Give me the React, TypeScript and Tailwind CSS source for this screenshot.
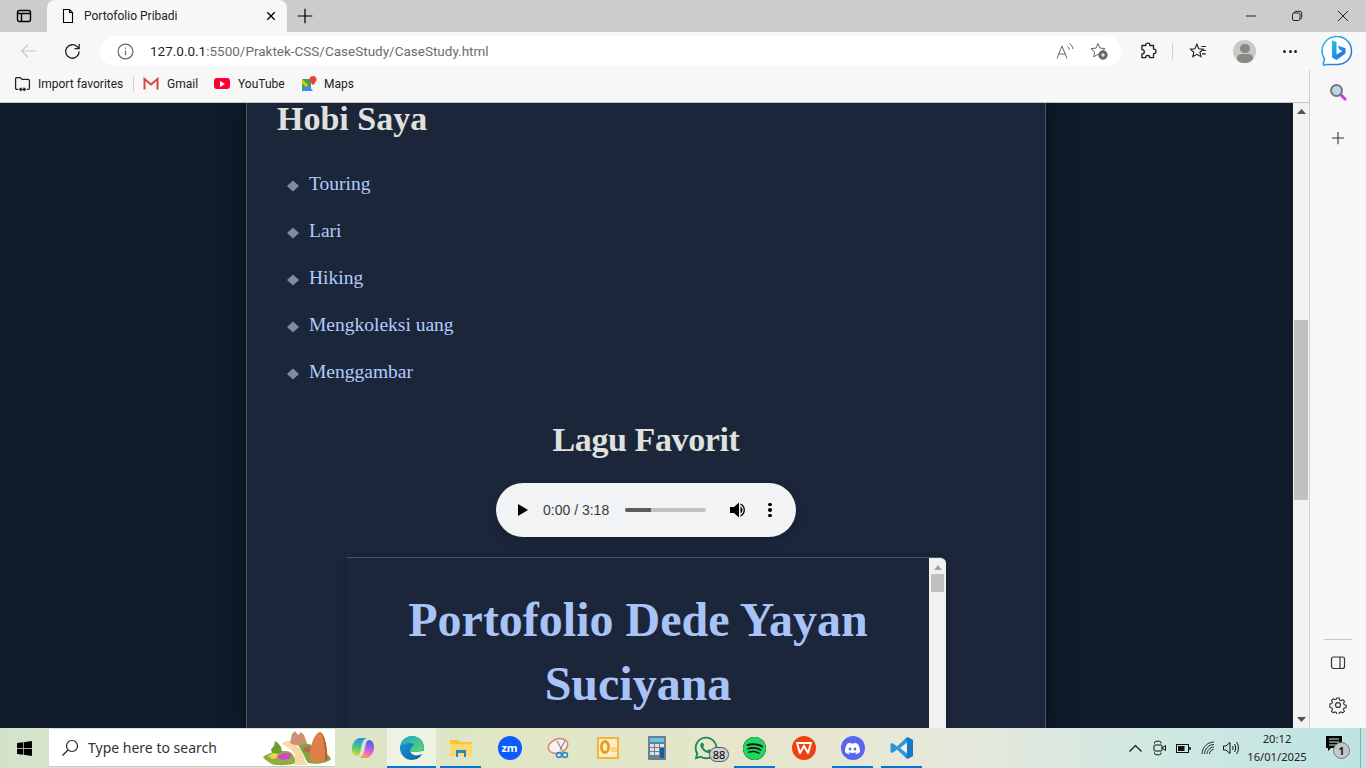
import { SiDiscord, SiSpotify } from 'react-icons/si'
import { FaWhatsapp, FaWindows } from 'react-icons/fa'

const hobbies = ['Touring', 'Lari', 'Hiking', 'Mengkoleksi uang', 'Menggambar']

function Stroke({ size = 16, children }: { size?: number; children: React.ReactNode }) {
  return (
    <svg width={size} height={size} viewBox="0 0 16 16" fill="none" stroke="currentColor" strokeWidth="1.1">
      {children}
    </svg>
  )
}

function TabBar() {
  return (
    <div className="h-8 bg-[#cccccc] flex items-end text-black">
      <div className="w-[47px] h-8 flex items-center justify-center">
        <Stroke size={16}>
          <rect x="1.5" y="2.5" width="13" height="11" rx="2" strokeWidth="1.4" />
          <path d="M1.5 5.5h13M5.5 5.5v8" strokeWidth="1.4" />
        </Stroke>
      </div>
      <div className="w-[240px] h-8 bg-[#f7f7f7] rounded-t-lg flex items-center pl-[13px] pr-[10px]">
        <Stroke size={16}>
          <path d="M3.5 1.5h6l3 3v10h-9z M9.5 1.5v3h3" />
        </Stroke>
        <span className="ml-[8px] text-[12px] flex-1 text-[#222]">Portofolio Pribadi</span>
        <Stroke size={12}>
          <path d="M3 3l10 10M13 3L3 13" strokeWidth="1.8" />
        </Stroke>
      </div>
      <div className="w-9 h-8 flex items-center justify-center">
        <Stroke size={18}>
          <path d="M8 1.5v13M1.5 8h13" />
        </Stroke>
      </div>
      <div className="flex-1" />
      <div className="h-8 flex items-center">
        <div className="w-[46px] flex justify-center">
          <svg width="12" height="12" viewBox="0 0 12 12"><path d="M1 6h10" stroke="#222" /></svg>
        </div>
        <div className="w-[46px] flex justify-center">
          <svg width="12" height="12" viewBox="0 0 12 12" fill="none" stroke="#222">
            <rect x="1.5" y="3" width="7.5" height="7.5" rx="1.4" />
            <path d="M3.5 3V2.2a1 1 0 0 1 1-.9h4.4a1.8 1.8 0 0 1 1.8 1.8v4.4a1 1 0 0 1-1 1H9" />
          </svg>
        </div>
        <div className="w-[46px] flex justify-center">
          <svg width="12" height="12" viewBox="0 0 12 12"><path d="M1 1l10 10M11 1L1 11" stroke="#222" /></svg>
        </div>
      </div>
    </div>
  )
}

function Toolbar() {
  return (
    <div className="h-[38px] bg-[#f7f7f7] flex items-center text-[#222]">
      <div className="w-[57px] flex justify-center pl-[1px] text-[#c9c9c9]">
        <Stroke size={18}>
          <path d="M14.5 8h-13M7 2.5L1.5 8 7 13.5" />
        </Stroke>
      </div>
      <div className="w-[30px] flex justify-center">
        <Stroke size={19}>
          <path d="M13.6 8a5.7 5.7 0 1 1-1.7-4.1l1.6 1.6M13.6 1.6v3.9H9.7" />
        </Stroke>
      </div>
      <div className="ml-[13px] w-[1021px] h-[30px] bg-white rounded-full flex items-center">
        <div className="ml-[17px] text-[#666]">
          <Stroke size={17}>
            <circle cx="8" cy="8" r="7" />
            <path d="M8 7v4.5M8 4.2v1.2" />
          </Stroke>
        </div>
        <span className="ml-[16px] text-[13.5px] flex-1">
          <span className="text-[#1f1f1f]">127.0.0.1</span>
          <span className="text-[#6c6c6c]">:5500/Praktek-CSS/CaseStudy/CaseStudy.html</span>
        </span>
        <div className="text-[#666] flex items-center gap-[15px] mr-[13px]">
          <svg width="19" height="18" viewBox="0 0 19 18" fill="none" stroke="currentColor">
            <path d="M1 16.5L6 4l5 12.5M2.7 12h6.6M11.5 4.5c1.1.7 1.7 1.7 1.9 3M13.5 1.5c2 1.2 3.1 3.1 3.4 5.5" />
          </svg>
          <svg width="18" height="18" viewBox="0 0 18 18" fill="none" stroke="currentColor">
            <path d="M8 1.5l2 4.6 5 .5-3.7 3.3 1 4.900L8 12.3l-4.3 2.500 1-4.900L1 6.600l5-.5z" />
            <circle cx="13" cy="13" r="4.2" fill="#666" />
            <path d="M13 11v4M11 13h4" stroke="#fff" />
          </svg>
        </div>
      </div>
      <div className="ml-[18px]">
        <Stroke size={18}>
          <path d="M6 2.2c0-1.6 3.6-1.6 3.6 0v.9h3.3v3.2h.7c1.900 0 1.900 4 0 4h-.7v3.600H9.500v-.7c0-1.600-3.500-1.600-3.500 0v.7H2.600v-3.300h.8c1.700 0 1.700-3.800 0-3.800h-.8V3.100H6z" strokeWidth="1.2" strokeLinejoin="round" />
        </Stroke>
      </div>
      <div className="ml-[15px] w-px h-4 bg-[#cfcfcf]" />
      <div className="ml-[16px]">
        <Stroke size={18}>
          <path d="M7 2l1.700 4 4 .4-3 2.700.9 4L7 11 3.400 13.100l.9-4-3-2.700 4-.4zM11 4h4M12.300 7.500H15M11.500 10.500H15" strokeWidth="1" />
        </Stroke>
      </div>
      <div className="ml-[26px] w-[23px] h-[23px] rounded-full bg-[#cbc9c6] overflow-hidden flex flex-col items-center">
        <div className="mt-[4px] w-[10px] h-[10px] rounded-full bg-[#8a8885]" />
        <div className="mt-[1px] w-[16px] h-[10px] rounded-full bg-[#8a8885]" />
      </div>
      <div className="ml-[27px] flex gap-[2.5px]">
        <span className="w-[3px] h-[3px] rounded-full bg-[#222]" />
        <span className="w-[3px] h-[3px] rounded-full bg-[#222]" />
        <span className="w-[3px] h-[3px] rounded-full bg-[#222]" />
      </div>
      <div className="ml-[24px]">
        <svg width="32" height="32" viewBox="0 0 32 32">
          <defs>
            <linearGradient id="bing" x1="0" y1="0" x2="1" y2="1">
              <stop offset="0" stopColor="#1fc3e8" />
              <stop offset="1" stopColor="#2563e0" />
            </linearGradient>
          </defs>
          <path d="M16 1.500a14.500 14.500 0 0 1 14.500 14.500C30.500 24 24 29.500 16 29.500H5c-1.400 1.200-3 .8-2.600-1L3.500 24A14.500 14.500 0 0 1 16 1.500z" fill="#fff" stroke="url(#bing)" strokeWidth="1.5" />
          <path d="M11 5.500l4.500 1.600v12.400l6-3.400-3-1.400-1.700-4.200 7.700 2.700v5.300L15.500 25 11 22.500z" fill="url(#bing)" />
        </svg>
      </div>
    </div>
  )
}

function Favorites() {
  return (
    <div className="h-[33px] pb-[5px] bg-[#f7f7f7] border-b border-[#c4c4c4] flex items-center text-[12px] text-[#222]">
      <div className="ml-[14px]">
        <Stroke size={17}>
          <path d="M4 13.500H2.500a1 1 0 0 1-1-1v-9a1 1 0 0 1 1-1h3.600l1.400 1.600h6a1 1 0 0 1 1 1v7.400a1 1 0 0 1-1 1H12M5.500 13.500h5M7 12l-1.700 1.500L7 15M9 12l1.700 1.500L9 15" strokeWidth="1.2" />
        </Stroke>
      </div>
      <span className="ml-[7px] w-[85px] whitespace-nowrap">Import favorites</span>
      <div className="ml-[10px] w-px h-4 bg-[#d0d0d0]" />
      <svg className="ml-[9px]" width="16" height="14" viewBox="0 0 16 14" fill="none">
        <path d="M1.500 12.500V2l6.500 5.500L14.500 2v10.500" stroke="#d5483c" strokeWidth="2" />
      </svg>
      <span className="ml-[8px] w-[31px]">Gmail</span>
      <div className="ml-[16px] w-4 h-[11px] rounded-[3px] bg-[#ff0033] flex items-center justify-center">
        <svg width="6" height="6" viewBox="0 0 6 6"><path d="M1 0l5 3-5 3z" fill="#fff" /></svg>
      </div>
      <span className="ml-[8px] w-[46px]">YouTube</span>
      <svg className="ml-[17px]" width="16" height="16" viewBox="0 0 16 16">
        <path d="M1 3h9v12H1z" fill="#34a853" />
        <path d="M1 15l6-6 5 6z" fill="#4285f4" />
        <path d="M1 3l6 6-2 2-4-4z" fill="#fbbc04" />
        <path d="M12 0a3.500 3.500 0 0 1 3.500 3.500C15.500 6 12 9 12 9S8.500 6 8.500 3.500A3.500 3.500 0 0 1 12 0z" fill="#ea4335" />
      </svg>
      <span className="ml-[7px]">Maps</span>
    </div>
  )
}

function AudioPlayer() {
  return (
    <div className="mt-[23px] mx-auto w-[300px] h-[54px] rounded-[27px] bg-[#f1f3f4] shadow-[0_4px_8px_rgba(0,0,0,0.15)] flex items-center font-['Liberation_Sans',sans-serif] text-[14px] text-[#3b3b3b]">
      <svg className="ml-[22px]" width="10" height="12" viewBox="0 0 10 12"><path d="M0 0l10 6-10 6z" fill="#000" /></svg>
      <span className="ml-[15px]">0:00 / 3:18</span>
      <div className="ml-[16px] w-[81px] h-1 rounded-full bg-[#c2c2c2] overflow-hidden">
        <div className="w-[26px] h-1 bg-[#5c5c5c]" />
      </div>
      <svg className="ml-[24px]" width="17" height="16" viewBox="0 0 17 16">
        <path d="M0 5h4l5-4.500v15L4 11H0z" fill="#000" />
        <path d="M10.500 4.500a4 4 0 0 1 0 7zM10.500 1.500a7 7 0 0 1 0 13v-1.600a5.400 5.400 0 0 0 0-9.800z" fill="#000" />
      </svg>
      <div className="ml-[21px] flex flex-col gap-[2px]">
        <span className="w-[3.5px] h-[3.5px] rounded-full bg-black" />
        <span className="w-[3.5px] h-[3.5px] rounded-full bg-black" />
        <span className="w-[3.5px] h-[3.5px] rounded-full bg-black" />
      </div>
    </div>
  )
}

function EmbeddedPage() {
  return (
    <div className="mt-[20px] ml-[100px] w-[599px] h-[200px] flex border-t border-[#46566f] rounded-tr-[6px] overflow-hidden shadow-[0_0_6px_rgba(0,0,0,0.2)]">
      <div className="w-[582px] text-center text-[#a9c3f7] font-bold text-[48px] leading-[64px] pt-[30px] px-[50px]">
        Portofolio Dede Yayan Suciyana
      </div>
      <div className="w-[17px] bg-[#f1f1f1] flex flex-col items-center">
        <svg className="mt-[7px]" width="8" height="5" viewBox="0 0 8 5"><path d="M4 0l4 5H0z" fill="#a3a3a3" /></svg>
        <div className="mt-[4px] w-[13px] h-[18px] bg-[#c1c1c1]" />
      </div>
    </div>
  )
}

function Page() {
  return (
    <div className="flex-1 min-h-0 flex overflow-hidden">
      <div className="flex-1 bg-[#0f1b2b] overflow-hidden flex justify-center">
        <div className="w-[800px] ml-[-1px] bg-[#1b263b] border-x border-[#46566f] shadow-[0_0_20px_rgba(0,0,0,0.5)] font-['Liberation_Serif',serif] overflow-hidden">
          <h2 className="pl-[30px] text-[34px] leading-[32px] font-bold text-[#e0e1dd]">Hobi Saya</h2>
          <ul className="mt-[37px] flex flex-col gap-[23px] pl-[40px]">
            {hobbies.map((hobby) => (
              <li key={hobby} className="flex items-center h-6 text-[19.5px] text-[#b3ccfa]">
                <svg className="mt-[3px]" width="12" height="12" viewBox="0 0 12 12"><path d="M6 .5l6 5.500-6 5.500-6-5.500z" fill="#778da9" /></svg>
                <span className="ml-[10px]">{hobby}</span>
              </li>
            ))}
          </ul>
          <h2 className="mt-[36px] text-center text-[34px] tracking-[-0.4px] leading-[40px] font-bold text-[#e0e1dd]">Lagu Favorit</h2>
          <AudioPlayer />
          <EmbeddedPage />
        </div>
      </div>
      <div className="w-4 bg-[#f1f1f1] flex flex-col items-center">
        <svg className="mt-[6px]" width="9" height="5" viewBox="0 0 9 5"><path d="M4.500 0l4.500 5H0z" fill="#505050" /></svg>
        <div className="mt-[206px] w-[14px] h-[180px] bg-[#c1c1c1]" />
        <svg className="mt-auto mb-[6px]" width="9" height="5" viewBox="0 0 9 5"><path d="M4.500 5L9 0H0z" fill="#505050" /></svg>
      </div>
    </div>
  )
}

function SideBar() {
  return (
    <div className="w-[57px] bg-[#f7f7f7] border-l border-[#d0d0d0] flex flex-col items-center text-[#333]">
      <svg className="mt-[13px]" width="18" height="18" viewBox="0 0 18 18" fill="none">
        <path d="M11 11l5 5" stroke="#c43ce0" strokeWidth="3" strokeLinecap="round" />
        <circle cx="7.500" cy="7.500" r="5.500" fill="#b8d8ec" stroke="#777" strokeWidth="2" />
      </svg>
      <div className="mt-[30px]">
        <Stroke size={14}>
          <path d="M8 1v14M1 8h14" strokeWidth="1.2" />
        </Stroke>
      </div>
      <div className="mt-auto w-[28px] h-px bg-[#c8c8c8]" />
      <div className="mt-[15px]">
        <Stroke size={16}>
          <rect x="1.500" y="2" width="13" height="11.500" rx="2" strokeWidth="1.2" />
          <path d="M10 2v11.500" strokeWidth="1.2" />
        </Stroke>
      </div>
      <div className="mt-[25px] mb-[14px]">
        <Stroke size={18}>
          <circle cx="8" cy="8" r="2.2" />
          <path d="M6.800 1h2.400l.4 2 1.500.7 1.800-1 1.600 1.700-1 1.700.6 1.600 2 .5v2.400l-2 .4-.7 1.500 1 1.800-1.700 1.600-1.700-1-1.600.6-.5 2H6.800l-.4-2-1.500-.6-1.800 1-1.600-1.700 1-1.700-.6-1.600-2-.5V7l2-.4.6-1.500-1-1.800 1.700-1.600 1.700 1 1.600-.6z" transform="translate(.9 .9) scale(.89)" />
        </Stroke>
      </div>
    </div>
  )
}

function TaskIcon({ active, open, children }: { active?: boolean; open?: boolean; children: React.ReactNode }) {
  return (
    <div className={active ? 'w-[49px] h-10 flex items-center justify-center relative bg-white/50' : 'w-[49px] h-10 flex items-center justify-center relative'}>
      {children}
      {open && <div className={active ? 'absolute bottom-0 inset-x-0 h-[2px] bg-[#0078d4]' : 'absolute bottom-0 inset-x-[4px] h-[2px] bg-[#0078d4]'} />}
    </div>
  )
}

function Scenery() {
  return (
    <svg className="ml-auto mr-[3px]" width="72" height="38" viewBox="0 0 72 38">
      <path d="M36 14c8-2 16 2 24 6 6 4 11 8 11 10-3 4-15 6-23 4-4-6-6-14-12-20z" fill="#7fa83c" />
      <path d="M3 28c5-4 13-6 23-6 6 0 9 6 10 12-8 3-22 3-26 0-3-2-6-4-7-6z" fill="#8fae3f" />
      <path d="M22 14c5-3 10-2 12 0l6 6c4 6 4 12 8 16H34c2-6 2-12-4-16-3-2-6-4-8-6z" fill="#f6d9a8" />
      <path d="M30 14l2-9 3-3 3 4 3-3 3 3 3 8c-5 3-12 3-17 0z" fill="#cf8f76" />
      <path d="M43 21c1-3 5-5 8-3v5c-3 1-6 0-8-2z" fill="#b5694a" />
      <path d="M50 31c-1-10 3-26 10-28 5 2 8 18 7 28-5 3-12 3-17 0z" fill="#dd7f48" />
      <path d="M60 3c4 4 6 18 5 29l2-1c1-10-2-26-7-28z" fill="#b55a2c" />
      <path d="M11 20l3-3 1-5 3 2 3 4 1 5-5 2-5-1z" fill="#6d9b30" />
      <path d="M8 27l5-3 5 1-1 4-5 1z" fill="#f2d24c" />
      <path d="M17 28c3-3 9-5 14-3l-1 4c-4 2-9 3-13-1z" fill="#d93fd6" />
    </svg>
  )
}

function Taskbar() {
  return (
    <div className="h-10 flex items-center bg-[linear-gradient(90deg,#d3e3c9_0%,#dfe6c5_35%,#e6e6cc_55%,#e7e8dc_70%,#cfe8e2_85%,#bde4e2_100%)] text-[#1a1a1a] font-['Noto_Sans',sans-serif]">
      <div className="w-[49px] flex justify-center">
        <FaWindows size={17} color="#000" />
      </div>
      <div className="w-[286px] h-[38px] bg-white border-b border-[#c8c8c8] flex items-center overflow-hidden">
        <svg className="ml-[12px]" width="18" height="18" viewBox="0 0 18 18" fill="none" stroke="#222" strokeWidth="1.2">
          <circle cx="11" cy="7" r="5.500" />
          <path d="M7 11l-5.500 5.500" />
        </svg>
        <span className="ml-[9px] text-[14px] text-[#333]">Type here to search</span>
        <Scenery />
      </div>
      <div className="ml-[3px] flex h-10">
        <TaskIcon>
          <svg width="24" height="24" viewBox="0 0 24 24">
            <defs>
              <linearGradient id="copA" x1="0.5" y1="0" x2="0.3" y2="1">
                <stop offset="0" stopColor="#2b8fe8" />
                <stop offset=".55" stopColor="#4fc97a" />
                <stop offset="1" stopColor="#f2cf3c" />
              </linearGradient>
              <linearGradient id="copB" x1="0.6" y1="0" x2="0.4" y2="1">
                <stop offset="0" stopColor="#3a6ae8" />
                <stop offset=".45" stopColor="#b95be8" />
                <stop offset=".8" stopColor="#f37ba0" />
                <stop offset="1" stopColor="#f7a33c" />
              </linearGradient>
            </defs>
            <path d="M6 3c1-1 2-1 3-1h7c-3 1-4 3-5 6l-2 9c-.5 2-2 3-3 3-3 0-5-3-5-7 0-5 2-8 5-10z" fill="url(#copA)" />
            <path d="M18 21c-1 1-2 1-3 1H8c3-1 4-3 5-6l2-9c.5-2 2-3 3-3 3 0 5 3 5 7 0 5-2 8-5 10z" fill="url(#copB)" />
          </svg>
        </TaskIcon>
        <TaskIcon active open>
          <svg width="24" height="24" viewBox="0 0 24 24">
            <defs>
              <linearGradient id="edgeBlue" x1="0" y1="0" x2="1" y2="1">
                <stop offset="0" stopColor="#1f9fd8" />
                <stop offset="1" stopColor="#0c59a4" />
              </linearGradient>
              <linearGradient id="edgeGreen" x1="0" y1="0" x2="1" y2="1">
                <stop offset="0" stopColor="#1aa8c8" />
                <stop offset="1" stopColor="#5fd96a" />
              </linearGradient>
            </defs>
            <circle cx="12" cy="12" r="12" fill="url(#edgeBlue)" />
            <path d="M24 15v9H12c6 0 9-3 10-6-4 2-9 2-11-1-1-2-1-2-1-2z" fill="#eef2e7" />
            <path d="M1 10c2-7 7-10 11-10 7 0 12 5 12 12 0 3-3 4-7 4h-7c0-4 3-6 4-8-4-2-10-1-13 2z" fill="url(#edgeGreen)" />
          </svg>
        </TaskIcon>
        <TaskIcon open>
          <svg width="22" height="20" viewBox="0 0 22 20">
            <path d="M0 2h8l2 2h12v14H0z" fill="#f8c53a" />
            <path d="M0 6h22v12H0z" fill="#fcd96a" />
            <path d="M6 12h10v7h-2v-4H8v4H6z" fill="#1f86d0" />
          </svg>
        </TaskIcon>
        <TaskIcon>
          <div className="w-6 h-6 rounded-full bg-[#0b5cff] flex items-center justify-center font-bold text-[11px] text-white">zm</div>
        </TaskIcon>
        <TaskIcon>
          <svg width="24" height="24" viewBox="0 0 24 24" fill="none">
            <ellipse cx="11" cy="10" rx="10" ry="7" fill="#f7f1ef" stroke="#d9827a" strokeWidth="1.5" transform="rotate(-20 11 10)" />
            <path d="M10 5l5 9M18 5l-5 9" stroke="#8b8b8b" strokeWidth="1.2" />
            <circle cx="12" cy="19" r="2.500" stroke="#2c87c7" strokeWidth="1.5" />
            <circle cx="18" cy="19" r="2.500" stroke="#2c87c7" strokeWidth="1.5" />
          </svg>
        </TaskIcon>
        <TaskIcon>
          <svg width="22" height="22" viewBox="0 0 22 22">
            <rect width="22" height="22" fill="#f3b33d" />
            <rect x="2" y="2" width="18" height="18" fill="#fdf0c8" />
            <ellipse cx="8" cy="10" rx="5" ry="7" fill="#ea9a1f" />
            <ellipse cx="8" cy="10" rx="2.2" ry="4" fill="#fdf0c8" />
            <path d="M14 10h6v5h-6z" fill="#f7d488" />
          </svg>
        </TaskIcon>
        <TaskIcon>
          <svg width="18" height="24" viewBox="0 0 18 24">
            <rect width="18" height="24" rx="1" fill="#6d7f8f" />
            <rect x="2" y="2" width="14" height="4" fill="#5cc8ee" />
            <path d="M2 8h4v3H2zM7 8h4v3H7zM12 8h4v3h-4zM2 12h4v3H2zM7 12h4v3H7zM2 16h4v3H2zM7 16h4v3H7z" fill="#dbe2e8" />
            <rect x="12" y="12" width="4" height="10" fill="#15609e" />
          </svg>
        </TaskIcon>
        <TaskIcon>
          <FaWhatsapp size={26} color="#1d8a5a" />
          <div className="absolute left-[28px] top-[19px] w-[20px] h-[15px] rounded-full bg-[#cfcfcf] border border-[#555] text-[11px] leading-[13px] text-center text-black">88</div>
        </TaskIcon>
        <TaskIcon open>
          <SiSpotify size={23} color="#1ed760" className="bg-[#111] rounded-full" />
        </TaskIcon>
        <TaskIcon>
          <div className="w-6 h-6 rounded-full bg-[#f0400f] flex items-center justify-center">
            <svg width="16" height="12" viewBox="0 0 16 12" fill="none" stroke="#fff" strokeWidth="2">
              <path d="M1 1h14l-3 10-4-7-4 7z" />
            </svg>
          </div>
        </TaskIcon>
        <TaskIcon open>
          <div className="w-6 h-6 rounded-full bg-[#5865f2] flex items-center justify-center">
            <SiDiscord size={15} color="#fff" />
          </div>
        </TaskIcon>
        <TaskIcon open>
          <svg width="24" height="24" viewBox="0 0 24 24">
            <path d="M17 1l6 3v16l-6 3L7 13.500 2.500 17 .5 16V8l2-1L7 10.500z" fill="#2a97d8" />
            <path d="M17 6.500L10 12l7 5.500z" fill="#e9f1ee" />
            <path d="M17 1l6 3v16l-6 3z" fill="#1678c2" />
          </svg>
        </TaskIcon>
      </div>
      <div className="flex-1" />
      <div className="flex items-center text-[#111]">
        <svg width="13" height="8" viewBox="0 0 13 8" fill="none" stroke="currentColor" strokeWidth="1.2"><path d="M.5 7.500l6-6 6 6" /></svg>
        <svg className="ml-[11px]" width="13" height="16" viewBox="0 0 13 16" fill="none" stroke="currentColor">
          <path d="M1.500 3.500V2.200c2-1.500 5-1.500 6.500 0v1.300M1.500 12.500v1.300c2 1.500 5 1.500 6.500 0v-1.300" />
          <rect x="1" y="5" width="8" height="6" rx="1" />
          <path d="M9 8l3.500-2.500v5z" />
        </svg>
        <svg className="ml-[10px]" width="15" height="9" viewBox="0 0 15 9" fill="none" stroke="currentColor">
          <rect x=".5" y=".5" width="12" height="8" />
          <rect x="2" y="2" width="6.5" height="5" fill="currentColor" stroke="none" />
          <path d="M14 3v3" strokeWidth="1.5" />
        </svg>
        <svg className="ml-[10px]" width="14" height="14" viewBox="0 0 14 14" fill="none" stroke="currentColor" strokeWidth=".9">
          <path d="M1 13C1 7 6 1 13 1M3.500 13c0-4.500 4-9.500 9.500-9.500M6 13c0-3 3-7 7-7M8.500 13c0-2 2-4.500 4-4.500" />
        </svg>
        <svg className="ml-[8px]" width="17" height="14" viewBox="0 0 17 14" fill="none" stroke="currentColor">
          <path d="M.5 5v4H3l4 3.500v-11L3 5zM9.500 5c.8 1 .8 3 0 4M11.500 3c1.500 2 1.500 6 0 8M13.500 1c2.500 3 2.500 9 0 12" />
        </svg>
      </div>
      <div className="ml-[7px] w-[60px] text-center text-[11.2px] leading-[18px] text-[#222]">
        <div>20:12</div>
        <div>16/01/2025</div>
      </div>
      <div className="ml-[19px] relative w-[24px] h-[24px]">
        <svg width="17" height="16" viewBox="0 0 17 16">
          <path d="M0 0h16v12H5l-3 3v-3H0z" fill="#000" />
          <path d="M3 3h10M3 6h10M3 9h10" stroke="#cfe8e2" />
        </svg>
        <div className="absolute left-[7px] top-[6px] w-[17px] h-[17px] rounded-full bg-[#c4c8c6] border border-[#777] text-[11px] leading-[15px] font-bold text-center text-[#222]">1</div>
      </div>
      <div className="ml-[10px] w-px h-10 bg-[#8fb0ae]" />
      <div className="w-[5px]" />
    </div>
  )
}

export default function App() {
  return (
    <div className="w-[1366px] h-[768px] overflow-hidden flex flex-col font-['Roboto',sans-serif]">
      <TabBar />
      <Toolbar />
      <div className="flex-1 min-h-0 flex">
        <div className="flex-1 min-w-0 flex flex-col">
          <Favorites />
          <Page />
        </div>
        <SideBar />
      </div>
      <Taskbar />
    </div>
  )
}
